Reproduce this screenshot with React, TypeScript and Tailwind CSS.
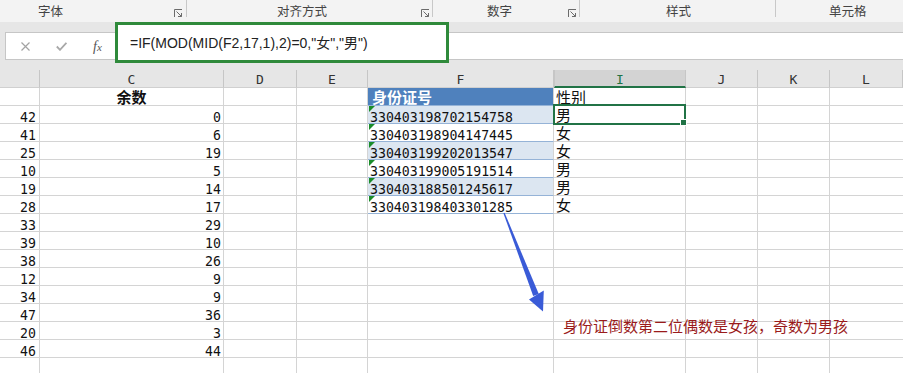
import React from "react";

const CJK = '"Noto Sans CJK SC", "Noto Sans", sans-serif';
const MONO = '"DejaVu Sans Mono", "Liberation Mono", "Noto Sans CJK SC", monospace';

type Row = { b?: string; c?: string; f?: string; i?: string; head?: boolean };

const rows: Row[] = [
  { c: "余数", f: "身份证号", i: "性别", head: true },
  { b: "42", c: "0", f: "330403198702154758", i: "男" },
  { b: "41", c: "6", f: "330403198904147445", i: "女" },
  { b: "25", c: "19", f: "330403199202013547", i: "女" },
  { b: "10", c: "5", f: "330403199005191514", i: "男" },
  { b: "19", c: "14", f: "330403188501245617", i: "男" },
  { b: "28", c: "17", f: "330403198403301285", i: "女" },
  { b: "33", c: "29" },
  { b: "39", c: "10" },
  { b: "38", c: "26" },
  { b: "12", c: "9" },
  { b: "34", c: "9" },
  { b: "47", c: "36" },
  { b: "20", c: "3" },
  { b: "46", c: "44" },
  {},
];

function Launcher() {
  return (
    <svg width="9" height="9" viewBox="0 0 9 9" className="mt-[9px]" fill="none" stroke="#6b6b6b" strokeWidth="1">
      <path d="M0.5 8 V0.5 H8" />
      <path d="M2.5 2.5 L7.5 7.5" />
      <path d="M7.5 4 V7.5 H4" />
    </svg>
  );
}

function Group({ label, width, pl, launcher, mr }: { label: string; width: number; pl: number; launcher?: boolean; mr?: number }) {
  return (
    <div className="flex h-[22px] shrink-0 items-start" style={{ width }}>
      <div className="text-[12.5px] leading-[22px] text-[#444]" style={{ paddingLeft: pl, fontFamily: CJK }}>
        {label}
      </div>
      <div className="flex-1" />
      {launcher && (
        <div style={{ marginRight: mr ?? 3 }}>
          <Launcher />
        </div>
      )}
      <div className="h-[17px] w-px bg-[#c8c8c8]" />
    </div>
  );
}

const cols = ["", "C", "D", "E", "F", "I", "J", "K", "L"];

export default function App() {
  return (
    <div className="relative h-[373px] w-[903px] overflow-hidden bg-white">
      {/* Ribbon group labels */}
      <div className="flex h-[22px] bg-[#f3f3f3]">
        <Group label="字体" width={187} pl={38} launcher mr={3} />
        <Group label="对齐方式" width={246} pl={90} launcher mr={2} />
        <Group label="数字" width={147} pl={54} launcher mr={2} />
        <Group label="样式" width={196} pl={86} />
        <div className="h-[22px] flex-1 pl-[53px] text-[12.5px] leading-[22px] text-[#444]" style={{ fontFamily: CJK }}>
          单元格
        </div>
      </div>

      {/* Formula bar band */}
      <div className="flex h-[48px] items-start bg-[#e6e6e6] pl-[5px]">
        <div className="mt-[10px] flex h-[28px] w-[110px] items-center border border-r-0 border-[#c6c6c6] bg-white pl-[15px]">
          <svg width="9" height="9" viewBox="0 0 9 9" stroke="#a3a3a3" strokeWidth="1.2">
            <path d="M0.5 0.5 L8.5 8.5 M8.5 0.5 L0.5 8.5" />
          </svg>
          <svg width="11" height="9" viewBox="0 0 11 9" className="ml-[26px]" fill="none" stroke="#a8a8a8" strokeWidth="1.8">
            <path d="M0.8 4.5 L4 7.8 L10.4 0.8" />
          </svg>
          <span className="ml-[26px] text-[14px] italic text-[#555]" style={{ fontFamily: '"Liberation Serif", serif' }}>
            f<span className="text-[11px]">x</span>
          </span>
        </div>
        <div
          className="flex h-[41px] w-[334px] items-center border-[3px] border-[#2f8a3b] bg-white pl-[12px] pt-[2px] text-[14px] text-[#222]"
          style={{ fontFamily: '"Liberation Sans", "Noto Sans CJK SC", sans-serif' }}
        >
          =IF(MOD(MID(F2,17,1),2)=0,"女","男")
        </div>
        <div className="mt-[10px] h-[28px] flex-1 border-y border-[#c6c6c6] bg-white" />
      </div>

      {/* Grid */}
      <div className="grid grid-cols-[40px_184px_73px_71px_186px_132px_72px_72px_73px]">
        {cols.map((c, idx) => {
          const isI = c === "I";
          return (
            <div
              key={"h" + idx}
              className={
                "h-[18px] border-r border-[#c6c6c6] text-center text-[13px] leading-[19px] " +
                (isI
                  ? "border-b-2 border-l border-b-[#217346] bg-[#d3d3d3] text-[#217346]"
                  : "border-b border-b-[#d0d0d0] bg-[#e6e6e6] text-[#333]")
              }
              style={{ fontFamily: MONO }}
            >
              {c}
            </div>
          );
        })}

        {rows.map((r, ri) => {
          const dataF = !r.head && r.f;
          const stripe = dataF && ri % 2 === 1;
          return (
            <React.Fragment key={ri}>
              <div
                className="h-[18px] border-b border-r border-[#d4d4d4] pr-[3px] text-right text-[13.2px] leading-[23px] text-[#111]"
                style={{ fontFamily: MONO }}
              >
                {r.b}
              </div>
              <div
                className={
                  "h-[18px] border-b border-r border-[#d4d4d4] text-[#111] " +
                  (r.head
                    ? "text-center text-[15px] font-bold leading-[17px]"
                    : "pr-[2px] text-right text-[13.2px] leading-[23px]")
                }
                style={{ fontFamily: r.head ? CJK : MONO }}
              >
                {r.c}
              </div>
              <div className="h-[18px] border-b border-r border-[#d4d4d4]" />
              <div className="h-[18px] border-b border-r border-[#d4d4d4]" />
              <div
                className={
                  "relative h-[18px] border-r border-[#d4d4d4] " +
                  (r.head
                    ? "border-b border-b-[#95b3d7] bg-[#4f81bd] pl-[4px] text-[15px] font-bold leading-[17px] text-white"
                    : dataF
                    ? "border-b border-b-[#95b3d7] pl-[2px] text-[13.2px] leading-[23px] text-[#111] " +
                      (stripe ? "bg-[#dce6f1]" : "bg-white")
                    : "border-b")
                }
                style={{ fontFamily: r.head ? CJK : MONO }}
              >
                {dataF && (
                  <svg width="6" height="6" viewBox="0 0 6 6" className="absolute left-[1px] top-0">
                    <path d="M0 0 H6 L0 6 Z" fill="#1a8c2a" />
                  </svg>
                )}
                {r.f}
              </div>
              <div
                className="h-[18px] border-b border-r border-[#d4d4d4] pl-[2px] text-[15px] leading-[17px] text-[#111]"
                style={{ fontFamily: CJK }}
              >
                {r.i}
              </div>
              <div className="h-[18px] border-b border-r border-[#d4d4d4]" />
              <div className="h-[18px] border-b border-r border-[#d4d4d4]" />
              <div className="h-[18px] border-b border-[#d4d4d4]" />
            </React.Fragment>
          );
        })}
      </div>

      {/* Selected cell outline */}
      <div className="pointer-events-none absolute left-[553px] top-[104px] h-[21px] w-[133px] border-2 border-[#217346]" />
      <div className="pointer-events-none absolute left-[680px] top-[119px] h-[7px] w-[7px] border border-white bg-[#217346]" />

      {/* Arrow */}
      <svg className="pointer-events-none absolute left-0 top-0" width="903" height="373" viewBox="0 0 903 373">
        <polygon points="504.6,212.8 503.4,213.2 533.2,296.1 538.8,293.9" fill="#3a5bd7" />
        <polygon points="529,299.5 543.8,290.5 543,311.5" fill="#3a5bd7" />
      </svg>

      {/* Annotation */}
      <div
        className="pointer-events-none absolute left-[563px] top-[318px] whitespace-nowrap text-[15px] leading-[15px] text-[#9a1b1b]"
        style={{ fontFamily: CJK }}
      >
        身份证倒数第二位偶数是女孩，奇数为男孩
      </div>
    </div>
  );
}
